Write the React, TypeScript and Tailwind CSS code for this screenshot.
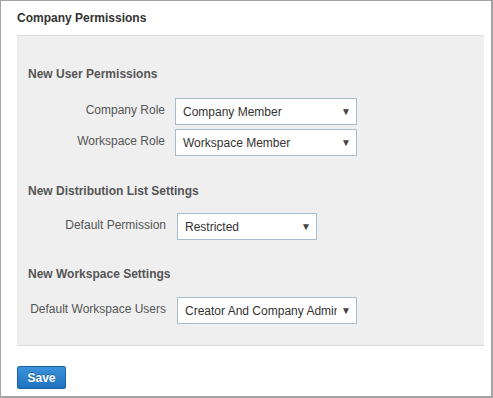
const font = { fontFamily: '"Liberation Sans", Arial, sans-serif' };

const Select = ({ value, width }: { value: string; width: string }) => (
  <div
    className={`${width} h-[27px] flex items-center bg-white border border-[#a7bccf] pl-[7px] pr-[5px] text-[12px] text-[#333]`}
  >
    <span className="flex-1 overflow-hidden whitespace-nowrap">{value}</span>
    <span className="ml-[4px] text-[10px] text-[#444] leading-none">▼</span>
  </div>
);

const Row = ({
  label,
  labelWidth,
  children,
}: {
  label: string;
  labelWidth: string;
  children: React.ReactNode;
}) => (
  <div className="flex items-start">
    <div
      className={`${labelWidth} shrink-0 text-right text-[12px] text-[#555] pt-[3px] whitespace-nowrap`}
    >
      {label}
    </div>
    {children}
  </div>
);

const Heading = ({ children }: { children: React.ReactNode }) => (
  <h3 className="text-[12px] font-bold text-[#555] leading-[14px]">{children}</h3>
);

export default function App() {
  return (
    <div
      style={font}
      className="w-[493px] h-[398px] bg-white border border-[#a3a3a3] border-r-2 border-b-2 box-border"
    >
      <div className="px-[16px] pt-[10px]">
        <h2 className="text-[12px] font-bold text-[#333] leading-[14px]">
          Company Permissions
        </h2>
        <div className="mt-[10px] w-[467px] h-[311px] bg-[#efefef] border-t border-b border-[#dcdcdc] pl-[11px] pt-[31px]">
          <Heading>New User Permissions</Heading>
          <div className="mt-[17px] flex flex-col gap-[4px]">
            <Row label="Company Role" labelWidth="w-[147px] pr-[10px]">
              <Select value="Company Member" width="w-[182px]" />
            </Row>
            <Row label="Workspace Role" labelWidth="w-[147px] pr-[10px]">
              <Select value="Workspace Member" width="w-[182px]" />
            </Row>
          </div>

          <div className="mt-[28px]">
            <Heading>New Distribution List Settings</Heading>
          </div>
          <div className="mt-[15px]">
            <Row label="Default Permission" labelWidth="w-[149px] pr-[11px]">
              <Select value="Restricted" width="w-[140px]" />
            </Row>
          </div>

          <div className="mt-[27px]">
            <Heading>New Workspace Settings</Heading>
          </div>
          <div className="mt-[16px]">
            <Row label="Default Workspace Users" labelWidth="w-[149px] pr-[11px]">
              <Select value="Creator And Company Administrators" width="w-[180px]" />
            </Row>
          </div>
        </div>
        <button className="mt-[20px] w-[49px] h-[23px] rounded-[2px] border border-[#1d64a6] bg-gradient-to-b from-[#3b92da] to-[#1f72bf] text-white text-[12px] font-bold [text-shadow:0_-1px_0_rgba(0,0,0,0.3)]">
          Save
        </button>
      </div>
    </div>
  );
}
